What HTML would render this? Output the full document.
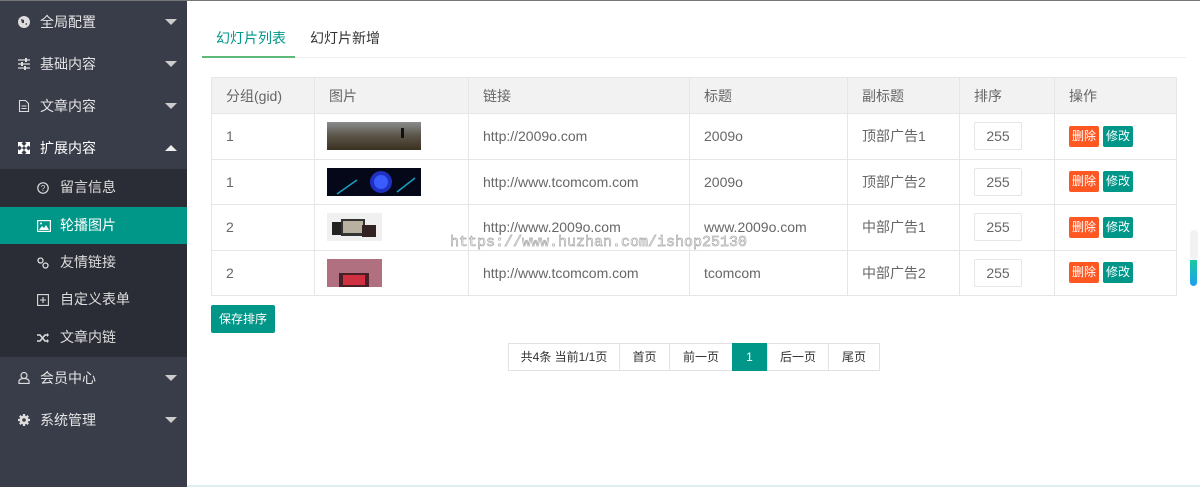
<!DOCTYPE html>
<html><head><meta charset="utf-8"><style>
*{margin:0;padding:0;box-sizing:border-box}
body{width:1200px;height:487px;overflow:hidden;background:#fff;font-family:"Liberation Sans","Noto Sans CJK SC",sans-serif;position:relative;font-size:14px;color:#666}
.top{position:absolute;left:0;top:0;width:1200px;height:1px;background:#777}
.side{position:absolute;left:0;top:1px;width:187px;height:486px;background:#393D49}
.it{position:absolute;left:0;width:187px;height:42px;color:#e4e4e4;font-size:14px;line-height:42px}
.it .ic{position:absolute;left:18px;top:15px;width:12px;height:12px}
.it .t{position:absolute;left:40px}
.it .ar{position:absolute;right:10px;top:18px;width:0;height:0;border-left:6px solid transparent;border-right:6px solid transparent;border-top:6px solid #ccc}
.it .ar.up{border-top:none;border-bottom:6px solid #eee}
.sub{position:absolute;left:0;top:169px;width:187px;height:188px;background:#2A2D36}
.si{position:absolute;left:0;width:187px;height:37px;line-height:37px;color:#ddd}
.si.on{background:#009688;color:#fff}
.si .ic{position:absolute;left:37px;top:13px;width:12px;height:12px}
.si .t{position:absolute;left:60px}
.tabs{position:absolute;left:202px;top:57px;width:984px;height:1px;background:#eee}
.tab{position:absolute;top:28px;font-size:14px;color:#333}
.tabline{position:absolute;left:202px;top:56px;width:93px;height:2px;background:#5FB878}
table{position:absolute;left:211px;top:77px;border-collapse:collapse;width:966px}
td,th{border:1px solid #e6e6e6;padding:0 0 0 14px;text-align:left;font-weight:normal;color:#666;font-size:14px}
th{background:#f2f2f2;height:36px}
td{height:45.5px}
.img{display:block;height:28px;margin-left:-2px}
.inp{display:inline-block;width:48px;height:28px;border:1px solid #e6e6e6;border-radius:2px;text-align:center;line-height:26px;color:#666}
.b{display:inline-block;height:21px;line-height:21px;padding:0 3px;font-size:12px;color:#fff;border-radius:2px;margin-right:4px}
.del{background:#FF5722}.mod{background:#009688}
.save{position:absolute;left:211px;top:305px;width:64px;height:28px;background:#009688;color:#fff;font-size:12px;line-height:28px;text-align:center;border-radius:2px}
.pg{position:absolute;top:343px;height:28px;border:1px solid #e2e2e2;line-height:26px;font-size:12px;color:#333;text-align:center;background:#fff}
.pg.on{background:#009688;color:#fff;border-color:#009688}
.wm{position:absolute;left:450px;top:234px;font-family:"Liberation Mono",monospace;font-size:15px;color:#fff;-webkit-text-stroke:0.7px #aaa;white-space:nowrap}
</style></head><body>
<div class="top"></div>
<div class="side">
 <div class="it" style="top:0"><svg class="ic" viewBox="0 0 12 12"><circle cx="6" cy="6" r="6" fill="#ddd"/><path d="M3 3l3 1 0 3-2 0z M7 8l2-1 0 2z" fill="#393D49"/></svg><span class="t">全局配置</span><span class="ar"></span></div>
 <div class="it" style="top:42px"><svg class="ic" viewBox="0 0 12 12"><path d="M0 2h12M0 6h12M0 10h12" stroke="#ddd" stroke-width="1.3"/><rect x="7" y="0" width="2" height="4" fill="#ddd"/><rect x="3" y="4" width="2" height="4" fill="#ddd"/><rect x="6" y="8" width="2" height="4" fill="#ddd"/></svg><span class="t">基础内容</span><span class="ar"></span></div>
 <div class="it" style="top:84px"><svg class="ic" viewBox="0 0 12 12"><path d="M1.5 .5h6l3 3v8h-9z M3.5 6h5M3.5 8.5h5" fill="none" stroke="#ddd" stroke-width="1.1"/></svg><span class="t">文章内容</span><span class="ar"></span></div>
 <div class="it" style="top:126px;color:#fff"><svg class="ic" viewBox="0 0 12 12"><path d="M0 0h5L3.5 1.5 6 4 4 6 1.5 3.5 0 5zM12 0v5l-1.5-1.5L8 6 6 4 8.5 1.5 7 0zM0 12V7l1.5 1.5L4 6l2 2-2.5 2.5L5 12zM12 12H7l1.5-1.5L6 8l2-2 2.5 2.5L12 7z" fill="#fff"/></svg><span class="t">扩展内容</span><span class="ar up"></span></div>
 <div class="it" style="top:356px"><svg class="ic" viewBox="0 0 12 12"><circle cx="6" cy="3.5" r="3" fill="none" stroke="#ddd" stroke-width="1.2"/><path d="M1 11.5v-2q0-3 5-3t5 3v2z" fill="none" stroke="#ddd" stroke-width="1.2"/></svg><span class="t">会员中心</span><span class="ar"></span></div>
 <div class="it" style="top:398px"><svg class="ic" viewBox="0 0 12 12"><circle cx="6" cy="6" r="4.5" fill="#ddd"/><path d="M6 0v12M0 6h12M1.8 1.8l8.4 8.4M10.2 1.8l-8.4 8.4" stroke="#ddd" stroke-width="2.2"/><circle cx="6" cy="6" r="1.8" fill="#393D49"/></svg><span class="t">系统管理</span><span class="ar"></span></div>
</div>
<div class="sub">
 <div class="si" style="top:0"><svg class="ic" viewBox="0 0 12 12"><circle cx="6" cy="6" r="5.2" fill="none" stroke="#ddd" stroke-width="1.2"/><text x="6" y="9" font-size="8" text-anchor="middle" fill="#ddd" font-family="Liberation Sans">?</text></svg><span class="t">留言信息</span></div>
 <div class="si on" style="top:38px"><svg class="ic" viewBox="0 0 14 12" style="width:14px"><rect x=".6" y=".6" width="12.8" height="10.8" fill="none" stroke="#fff" stroke-width="1.2"/><path d="M2 10l3-4 2 2 2-3 3 5z" fill="#fff"/><circle cx="4" cy="3.5" r="1" fill="#fff"/></svg><span class="t">轮播图片</span></div>
 <div class="si" style="top:75px"><svg class="ic" viewBox="0 0 12 12"><circle cx="3.5" cy="3.5" r="2.5" fill="none" stroke="#ddd" stroke-width="1.3"/><circle cx="8.5" cy="8.5" r="2.5" fill="none" stroke="#ddd" stroke-width="1.3"/></svg><span class="t">友情链接</span></div>
 <div class="si" style="top:112px"><svg class="ic" viewBox="0 0 12 12"><rect x=".6" y=".6" width="10.8" height="10.8" fill="none" stroke="#ddd" stroke-width="1.1"/><path d="M6 3v6M3 6h6" stroke="#ddd" stroke-width="1.1"/></svg><span class="t">自定义表单</span></div>
 <div class="si" style="top:150px"><svg class="ic" viewBox="0 0 12 12"><path d="M0 3h3l5 6h3M0 9h3l5-6h3" fill="none" stroke="#ddd" stroke-width="1.5"/><path d="M10 1l2 2-2 2zM10 7l2 2-2 2z" fill="#ddd"/></svg><span class="t">文章内链</span></div>
</div>
<div class="tabs"></div>
<div class="tabline"></div>
<div class="tab" style="left:216px;color:#009688">幻灯片列表</div>
<div class="tab" style="left:310px">幻灯片新增</div>
<table>
<tr><th style="width:103px">分组(gid)</th><th style="width:154px">图片</th><th style="width:221px">链接</th><th style="width:158px">标题</th><th style="width:112px">副标题</th><th style="width:95px">排序</th><th>操作</th></tr>
<tr><td>1</td><td><svg class="img" width="94" height="28"><defs><linearGradient id="g1" x1="0" y1="0" x2="0" y2="1"><stop offset="0" stop-color="#8a8d8e"/><stop offset=".5" stop-color="#5a5448"/><stop offset="1" stop-color="#3a3020"/></linearGradient></defs><rect width="94" height="28" fill="url(#g1)"/><rect x="74" y="6" width="3" height="10" fill="#111"/></svg></td><td>http://2009o.com</td><td>2009o</td><td>顶部广告1</td><td><span class="inp">255</span></td><td><span class="b del">删除</span><span class="b mod">修改</span></td></tr>
<tr><td>1</td><td><svg class="img" width="94" height="28"><rect width="94" height="28" fill="#050818"/><circle cx="54" cy="14" r="11" fill="#2030c0"/><circle cx="54" cy="14" r="7" fill="#3a5cff"/><path d="M10 26l20-14M70 24l18-14" stroke="#1aa0c0" stroke-width="1.5"/></svg></td><td>http://www.tcomcom.com</td><td>2009o</td><td>顶部广告2</td><td><span class="inp">255</span></td><td><span class="b del">删除</span><span class="b mod">修改</span></td></tr>
<tr><td>2</td><td><svg class="img" width="55" height="28"><rect width="55" height="28" fill="#f0f0f0"/><rect x="5" y="9" width="10" height="13" fill="#222"/><rect x="14" y="6" width="24" height="17" fill="#333"/><rect x="16" y="8" width="20" height="12" fill="#b8b0a0"/><rect x="35" y="12" width="14" height="12" fill="#322"/></svg></td><td>http://www.2009o.com</td><td>www.2009o.com</td><td>中部广告1</td><td><span class="inp">255</span></td><td><span class="b del">删除</span><span class="b mod">修改</span></td></tr>
<tr><td>2</td><td><svg class="img" width="55" height="28"><rect width="55" height="28" fill="#b07080"/><rect x="12" y="14" width="30" height="14" fill="#4a2028"/><rect x="16" y="16" width="22" height="10" fill="#d03040"/></svg></td><td>http://www.tcomcom.com</td><td>tcomcom</td><td>中部广告2</td><td><span class="inp">255</span></td><td><span class="b del">删除</span><span class="b mod">修改</span></td></tr>
</table>
<div class="wm">https://www.huzhan.com/ishop25130</div>
<div class="save">保存排序</div>
<div class="pg" style="left:508px;width:112px">共4条 当前1/1页</div>
<div class="pg" style="left:619px;width:51px">首页</div>
<div class="pg" style="left:669px;width:64px">前一页</div>
<div class="pg on" style="left:732px;width:35px">1</div>
<div class="pg" style="left:767px;width:62px">后一页</div>
<div class="pg" style="left:828px;width:52px">尾页</div>
<div style="position:absolute;left:1190px;top:230px;width:8px;height:30px;background:#f2f2f2;border-radius:4px"></div>
<div style="position:absolute;left:1190px;top:260px;width:7px;height:26px;background:linear-gradient(#1cc9a0,#1e9ff2);border-radius:0 0 4px 4px"></div>
<div style="position:absolute;left:187px;top:485px;width:1013px;height:2px;background:#e0eef0"></div>
</body></html>
